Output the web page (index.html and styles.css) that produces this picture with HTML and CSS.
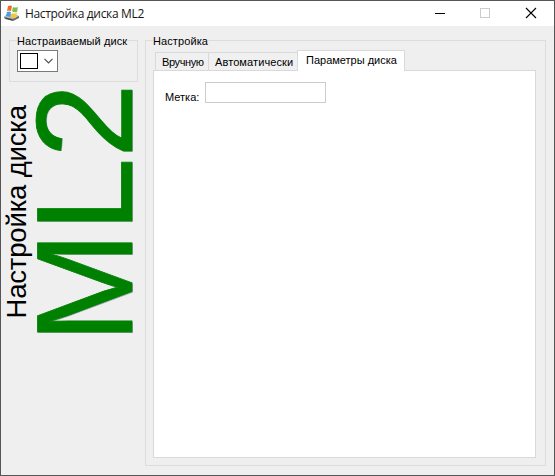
FILE: index.html
```html
<!DOCTYPE html>
<html lang="ru">
<head>
<meta charset="utf-8">
<title>Настройка диска ML2</title>
<link rel="stylesheet" href="styles.css">
</head>
<body>
<div class="window">
  <header class="titlebar">
    <svg class="app-icon" width="16" height="17" viewBox="0 0 16 17">
      <path d="M0 12L4 9L15 11L15 13L9 16L1 14Z" fill="#66686b"/>
      <path d="M0 12L4 9L15 11L9 14Z" fill="#b9bcbe"/>
      <path d="M2 13L8 15" stroke="#444" stroke-width="1"/>
      <path d="M4 1Q6 0 8 1L7 6Q5 5 3 6Z" fill="#ee6a2c"/>
      <path d="M9 2Q11 3 14 2L13 7Q10 8 8 6Z" fill="#7cc04b"/>
      <path d="M3 7Q5 6 7 7L6 12Q4 11 2 11Z" fill="#4a9be0"/>
      <path d="M8 8Q10 9 13 8L12 13Q9 13 7 12Z" fill="#f6c63a"/>
    </svg>
    <h1 class="title">Настройка диска ML2</h1>
    <div class="controls">
      <svg width="46" height="25" viewBox="0 0 46 25"><path d="M18 12.5h10" stroke="#000"/></svg>
      <svg width="46" height="25" viewBox="0 0 46 25"><rect x="17.5" y="7.5" width="9" height="9" fill="none" stroke="#ccc"/></svg>
      <svg width="46" height="25" viewBox="0 0 46 25"><path d="M17 7l10 10M27 7l-10 10" stroke="#000" stroke-width="1.1"/></svg>
    </div>
  </header>
  <main class="client">
    <aside class="side">
      <section class="group group-disk">
        <h2 class="legend"><span class="t-disk">Настраиваемый диск</span></h2>
        <div class="combo">
          <span class="swatch"></span>
          <svg width="9" height="6" viewBox="0 0 9 6"><path d="M.5 .8L4.5 4.8L8.5 .8" fill="none" stroke="#505050" stroke-width="1.2"/></svg>
        </div>
      </section>
      <svg class="banner" width="168" height="266" viewBox="0 82 168 266">
        <g transform="rotate(-90)" font-family="Liberation Sans, Arial, sans-serif">
          <text x="-318.5" y="25.8" font-size="27.5" textLength="213.5">Настройка диска</text>
          <text x="-344" y="132.8" font-size="138" fill="#a5afbd" textLength="260" lengthAdjust="spacingAndGlyphs">ML2</text>
          <text x="-343" y="132" font-size="138" fill="#008000" stroke="#008000" stroke-width=".8" textLength="259.5" lengthAdjust="spacingAndGlyphs">ML2</text>
        </g>
      </svg>
    </aside>
    <section class="group group-settings">
      <h2 class="legend"><span class="t-set">Настройка</span></h2>
      <nav class="tabs">
        <div class="tab tab-manual"><span class="t-man">Вручную</span></div>
        <div class="tab tab-auto"><span class="t-auto">Автоматически</span></div>
        <div class="tab active"><span class="t-par">Параметры диска</span></div>
      </nav>
      <div class="panel">
        <label class="t-label" for="label">Метка:</label>
        <input id="label" class="field" type="text">
      </div>
    </section>
  </main>
</div>
</body>
</html>
```

FILE: styles.css
```css
* { box-sizing: border-box; }
body { margin: 0; font: 11px/13px "Liberation Sans", Arial, sans-serif; color: #000; }
h1, h2 { margin: 0; font-size: inherit; font-weight: normal; }
.window { width: 555px; height: 476px; border: 1px solid #555; background: #efefef; display: flex; flex-direction: column; overflow: hidden; }
.titlebar { height: 25px; flex: none; background: #fff; display: flex; align-items: center; padding-left: 3px; }
.app-icon { flex: none; }
.title { font: 12px/16px "Open Sans", sans-serif; margin-left: 5px; white-space: nowrap; color: #171717; letter-spacing: -.33px; }
.controls { display: flex; margin-left: auto; margin-right: -1px; }
.controls svg { display: block; }
.client { flex: 1; display: flex; padding: 14px 8px 9px 0; }
.side { width: 144px; flex: none; display: flex; flex-direction: column; }
.group { border: 1px solid #dcdcdc; }
.group-disk { width: 129px; height: 42px; margin-left: 8px; flex: none; padding: 0 7px; }
.legend { display: flex; height: 13px; margin-top: -7px; white-space: nowrap; }
.legend span { background: #efefef; height: 14px; padding-top: 1px; }
.t-disk { letter-spacing: .1px; }
.t-set { letter-spacing: .1px; }
.combo { width: 41px; height: 22px; margin-top: 3px; border: 1px solid #7a7a7a; background: #fff; display: flex; align-items: center; padding: 0 4px 0 2px; justify-content: space-between; }
.swatch { width: 18px; height: 16px; border: 1px solid #000; }
.banner { display: block; flex: none; margin-left: -1px; overflow: visible; }
.group-settings { flex: 1; height: 426px; padding: 0 9px 7px 7px; display: flex; flex-direction: column; }
.group-settings .legend { flex: none; }
.tabs { display: flex; align-items: flex-end; height: 23px; flex: none; padding-left: 2px; margin-top: 1px; margin-bottom: -1px; position: relative; z-index: 1; }
.tab { height: 18px; border: 1px solid #d9d9d9; border-bottom: 0; background: #f0f0f0; margin-bottom: 1px; white-space: nowrap; padding: 3px 0 0 6px; }
.tab-manual { width: 54px; }
.tab-auto { width: 90px; margin-left: -1px; }
.t-man { letter-spacing: -.4px; }
.t-auto { letter-spacing: .1px; }
.tab.active { width: 108px; height: 21px; margin: 0 0 0 -1px; background: #fff; padding-left: 8px; }
.panel { flex: 1; border: 1px solid #d9d9d9; background: #fff; display: flex; align-items: flex-start; padding: 11px; }
.panel label { width: 40px; padding-top: 9px; white-space: nowrap; }
.field { width: 121px; height: 21px; border: 1px solid #ccc; background: #fff; padding: 0 3px; font: inherit; outline: 0; }
```
